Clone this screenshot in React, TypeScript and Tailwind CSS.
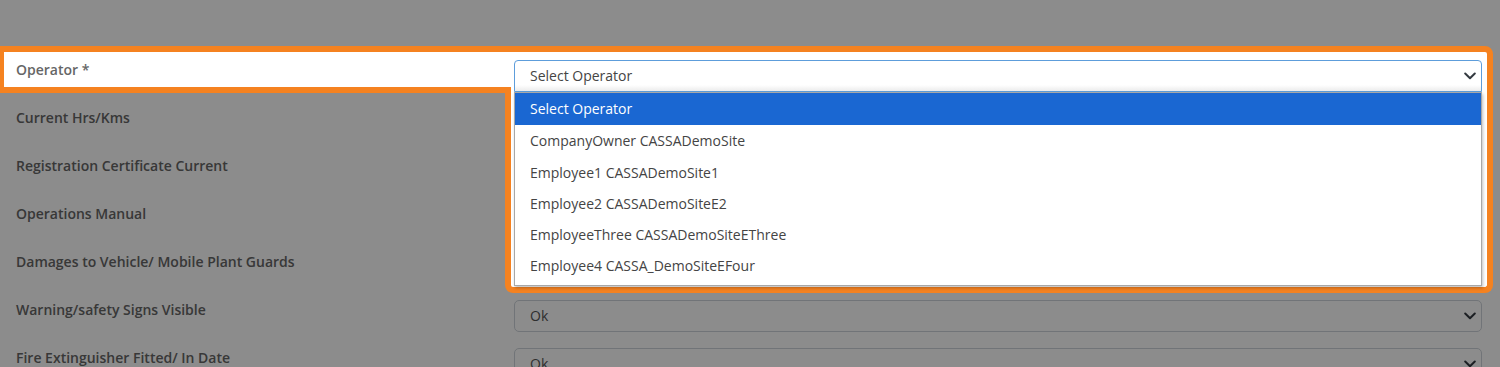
import React from 'react';

const operators = [
  'Select Operator',
  'CompanyOwner CASSADemoSite',
  'Employee1 CASSADemoSite1',
  'Employee2 CASSADemoSiteE2',
  'EmployeeThree CASSADemoSiteEThree',
  'Employee4 CASSA_DemoSiteEFour',
];

const rows = [
  { label: 'Current Hrs/Kms', value: '' },
  { label: 'Registration Certificate Current', value: 'Ok' },
  { label: 'Operations Manual', value: 'Ok' },
  { label: 'Damages to Vehicle/ Mobile Plant Guards', value: 'Ok' },
  { label: 'Warning/safety Signs Visible', value: 'Ok' },
  { label: 'Fire Extinguisher Fitted/ In Date', value: 'Ok' },
];

const Chevron = () => (
  <svg width="12" height="8" viewBox="0 0 12 8" fill="none" className="shrink-0">
    <path d="M1.2 1.5 L6 6.2 L10.8 1.5" stroke="#343a40" strokeWidth="2" strokeLinecap="round" strokeLinejoin="round" />
  </svg>
);

const SelectBox: React.FC<{ value: string }> = ({ value }) => (
  <div className="flex h-8 flex-1 items-center justify-between rounded-[5px] border border-[#ced4da] bg-white pl-[15px] pr-[5px] text-[14px] leading-5 text-[#555]">
    <span>{value}</span>
    <Chevron />
  </div>
);

export default function App() {
  return (
    <div className="relative h-[367px] overflow-hidden bg-white font-['Open_Sans',sans-serif]">
      <div className="flex flex-col gap-4 pt-[60px]">
        {/* highlighted row */}
        <div className="relative z-30 flex items-start pl-4 pr-[18px]">
          <label className="w-[498px] text-[14px] leading-5 font-semibold text-[#666]">Operator *</label>
          <div className="relative flex-1">
            <div className="flex h-8 items-center justify-between rounded-t-[4px] border border-[#5d9ddb] bg-gradient-to-b from-white from-80% to-[#ececec] pl-[15px] pr-[5px] text-[14px] leading-5 text-[#444]">
              <span>Select Operator</span>
              <Chevron />
            </div>
            <ul className="absolute left-0 right-0 top-full border border-[#a8a8a8] bg-white pb-1 shadow-[1px_2px_3px_rgba(0,0,0,0.25)]">
              {operators.map((op, i) => (
                <li
                  key={op}
                  className={`flex items-center pl-[15px] text-[14px] leading-5 ${i < 2 ? 'h-8' : 'h-[31px]'} ${
                    i === 0 ? 'bg-[#1a67d2] text-white' : 'text-[#444]'
                  }`}
                >
                  {op}
                </li>
              ))}
            </ul>
          </div>
        </div>

        {rows.map((r) => (
          <div key={r.label} className="flex items-start pl-4 pr-[18px]">
            <label className="w-[498px] text-[14px] leading-5 font-semibold text-[#666]">{r.label}</label>
            {r.value ? (
              <SelectBox value={r.value} />
            ) : (
              <div className="h-8 flex-1 rounded-[5px] border border-[#ced4da] bg-white" />
            )}
          </div>
        ))}
      </div>

      {/* tour overlay */}
      <div className="absolute inset-0 z-10 bg-black/45" />
      <div className="absolute left-[-2px] top-[46px] z-20 h-[47px] w-[1495px] rounded-tr-lg border-[6px] border-[#f58220] bg-white" />
      <div className="absolute left-[505px] top-[87px] z-20 h-[206px] w-[988px] rounded-b-lg border-[6px] border-t-0 border-[#f58220] bg-white" />
    </div>
  );
}
